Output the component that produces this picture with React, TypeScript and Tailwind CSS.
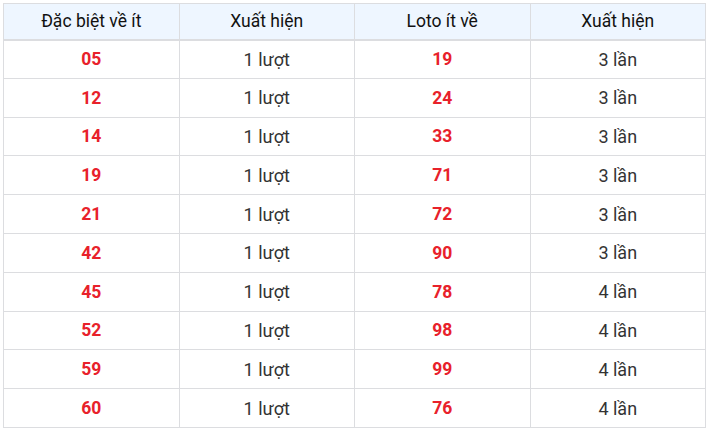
const rows = [
  ["05", "1 lượt", "19", "3 lần"],
  ["12", "1 lượt", "24", "3 lần"],
  ["14", "1 lượt", "33", "3 lần"],
  ["19", "1 lượt", "71", "3 lần"],
  ["21", "1 lượt", "72", "3 lần"],
  ["42", "1 lượt", "90", "3 lần"],
  ["45", "1 lượt", "78", "4 lần"],
  ["52", "1 lượt", "98", "4 lần"],
  ["59", "1 lượt", "99", "4 lần"],
  ["60", "1 lượt", "76", "4 lần"],
]

const headers = ["Đặc biệt về ít", "Xuất hiện", "Loto ít về", "Xuất hiện"]

export default function App() {
  return (
    <div className="w-[711px] h-[432px] bg-white pl-[3px] pt-[3px] font-['Roboto',sans-serif]">
      <table className="w-[703px] border-collapse table-fixed">
        <thead>
          <tr className="bg-[#eef6ff]">
            {headers.map((h, i) => (
              <th
                key={i}
                className="h-[36px] border border-[#dcdde0] border-b-2 text-[17.5px] font-normal text-[#111] text-center"
              >
                {h}
              </th>
            ))}
          </tr>
        </thead>
        <tbody>
          {rows.map((r, i) => (
            <tr key={i} className="h-[38.8px]">
              <td className="border border-[#dcdde0] text-center text-[17.5px] font-bold text-[#e8212a]">{r[0]}</td>
              <td className="border border-[#dcdde0] text-center text-[18px] text-[#333]">{r[1]}</td>
              <td className="border border-[#dcdde0] text-center text-[17.5px] font-bold text-[#e8212a]">{r[2]}</td>
              <td className="border border-[#dcdde0] text-center text-[18px] text-[#333]">{r[3]}</td>
            </tr>
          ))}
        </tbody>
      </table>
    </div>
  )
}
